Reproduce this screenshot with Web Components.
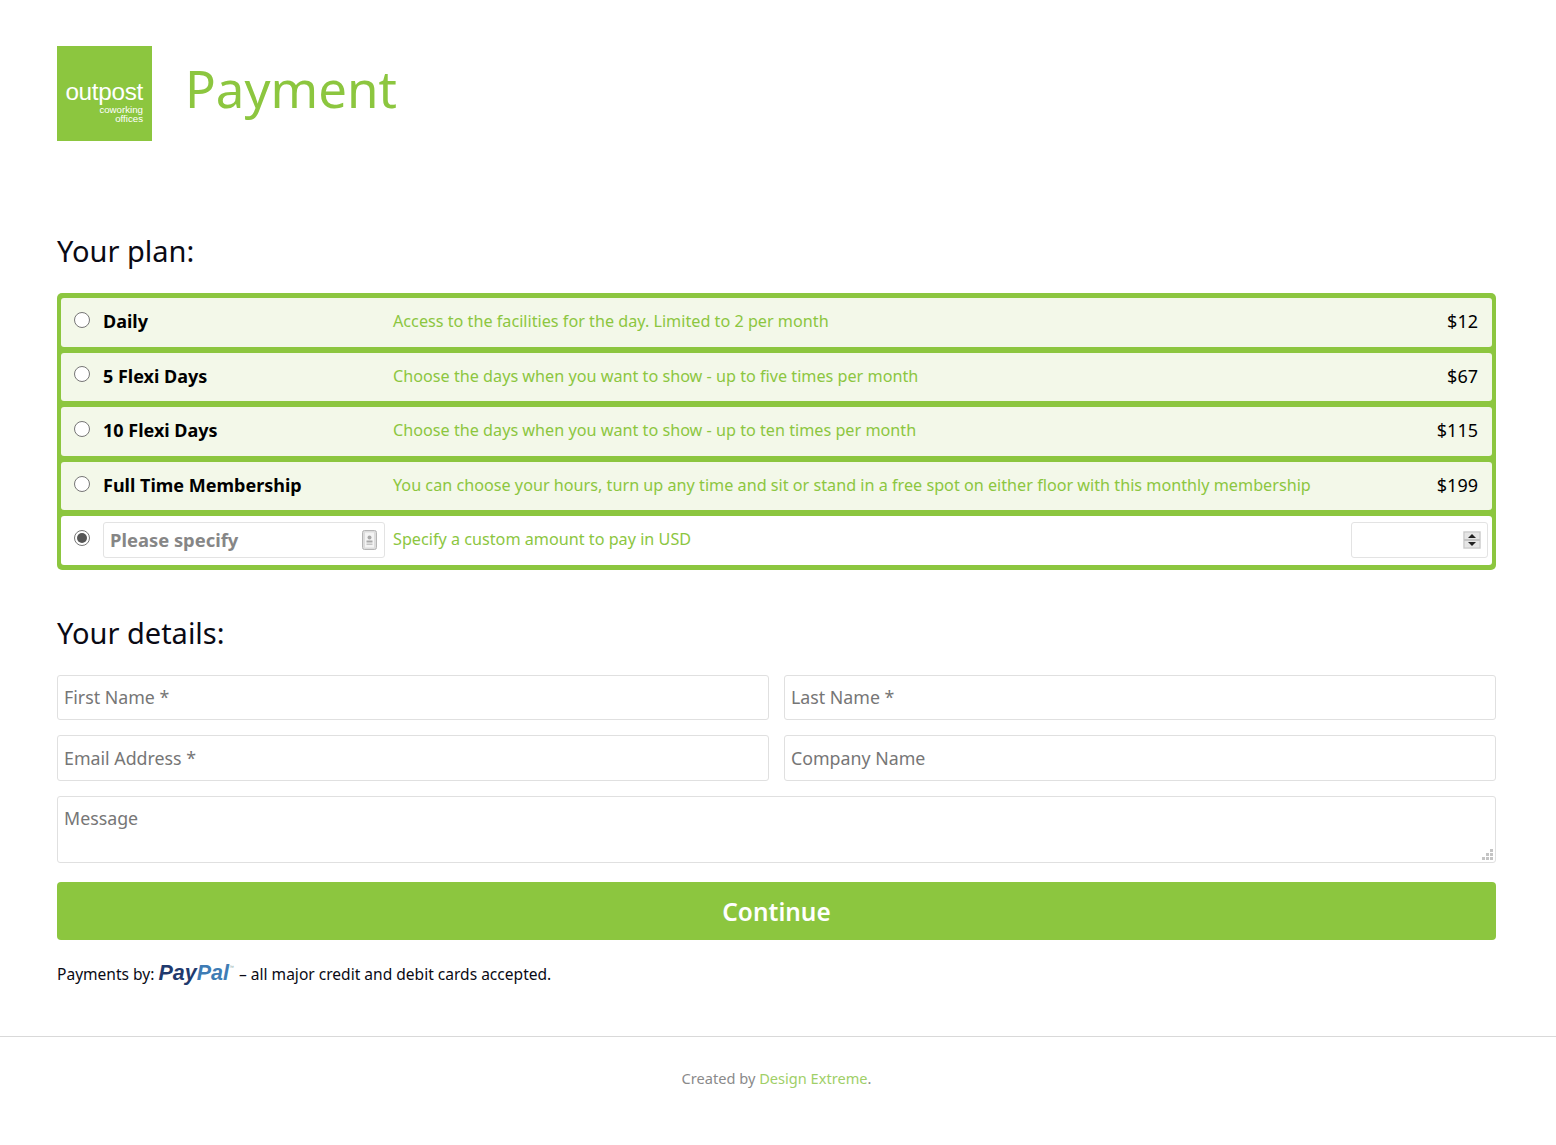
<!DOCTYPE html>
<html>
<head>
<meta charset="utf-8">
<title>Payment</title>
<style>
  html, body { margin: 0; background: #fff; }
  body { font-family: "Noto Sans", "Open Sans", sans-serif; color: #000; }
</style>
</head>
<body>
<pay-page>
  <pay-header slot="header">Payment</pay-header>

  <section-title>Your plan:</section-title>
  <plan-table>
    <plan-row name="Daily" price="$12">Access to the facilities for the day. Limited to 2 per month</plan-row>
    <plan-row name="5 Flexi Days" price="$67">Choose the days when you want to show - up to five times per month</plan-row>
    <plan-row name="10 Flexi Days" price="$115">Choose the days when you want to show - up to ten times per month</plan-row>
    <plan-row name="Full Time Membership" price="$199">You can choose your hours, turn up any time and sit or stand in a free spot on either floor with this monthly membership</plan-row>
    <plan-row custom name="Please specify">Specify a custom amount to pay in USD</plan-row>
  </plan-table>

  <section-title class="details">Your details:</section-title>
  <details-form>
    <form-field>First Name *</form-field>
    <form-field>Last Name *</form-field>
    <form-field>Email Address *</form-field>
    <form-field>Company Name</form-field>
    <form-field multiline>Message</form-field>
  </details-form>

  <pay-button>Continue</pay-button>
  <pay-note></pay-note>
</pay-page>
<pay-footer></pay-footer>

<script>
class PayPage extends HTMLElement {
  constructor() {
    super();
    this.attachShadow({ mode: "open" });
    this.shadowRoot.innerHTML = `
      <style>
        :host { display: block; padding: 46px 60px 0 57px; }
        ::slotted(section-title) { margin-top: 90px; }
        ::slotted(section-title.details) { margin-top: 43px; }
      </style>
      <slot name="header"></slot>
      <slot></slot>
    `;
  }
}

class PayHeader extends HTMLElement {
  constructor() {
    super();
    this.attachShadow({ mode: "open" });
    this.shadowRoot.innerHTML = `
      <style>
        :host { display: flex; align-items: flex-start; gap: 33px; }
        .logo {
          box-sizing: border-box;
          width: 95px;
          height: 95px;
          background: #8cc63f;
          color: #fff;
          font-family: "Liberation Sans", sans-serif;
          text-align: right;
          padding: 34px 9px 0 0;
        }
        .logo b { display: block; font-weight: 400; font-size: 24.3px; line-height: 24px; letter-spacing: -0.3px; }
        .logo span { display: block; font-size: 9.7px; line-height: 9px; }
        .logo span:first-of-type { margin-top: 1px; }
        h1 {
          margin: 10px 0 0;
          font-size: 51px;
          line-height: 64px;
          font-weight: 400;
          color: #8cc63f;
        }
      </style>
      <div class="logo"><b>outpost</b><span>coworking</span><span>offices</span></div>
      <h1><slot></slot></h1>
    `;
  }
}

class SectionTitle extends HTMLElement {
  constructor() {
    super();
    this.attachShadow({ mode: "open" });
    this.shadowRoot.innerHTML = `
      <style>
        :host { display: block; font-size: 29px; line-height: 40px; margin-bottom: 22px; color: #0a0a14; }
      </style>
      <slot></slot>
    `;
  }
}

class PlanTable extends HTMLElement {
  constructor() {
    super();
    this.attachShadow({ mode: "open" });
    this.shadowRoot.innerHTML = `
      <style>
        :host {
          display: grid;
          grid-auto-rows: 48.6px;
          gap: 6px;
          padding: 5px 4px;
          background: #8cc63f;
          border-radius: 5px;
        }
      </style>
      <slot></slot>
    `;
  }
}

class PlanRow extends HTMLElement {
  constructor() {
    super();
    this.attachShadow({ mode: "open" });
    const custom = this.hasAttribute("custom");
    const name = this.getAttribute("name");
    const price = this.getAttribute("price");
    this.shadowRoot.innerHTML = `
      <style>
        :host {
          display: grid;
          grid-template-columns: 16px 295px 1fr auto;
          align-items: center;
          padding: 0 14px 0 13px;
          background: ${custom ? "#fff" : "#f3f8e9"};
          border-radius: 3px;
          font-size: 18px;
        }
        .radio {
          box-sizing: border-box;
          width: 16px;
          height: 16px;
          border: 1px solid #767676;
          border-radius: 50%;
          background: #fff;
          margin-bottom: 5px;
          position: relative;
        }
        .radio.on::after {
          content: "";
          position: absolute;
          inset: 2px;
          border-radius: 50%;
          background: #555;
        }
        .name { margin: 0 0 2px 13px; font-weight: 700; line-height: 24px; }
        .desc { margin: 0 0 2.5px 8px; color: #8cc63f; font-size: 16.2px; white-space: nowrap; }
        .price { color: #000; line-height: 24px; margin-bottom: 2px; }
        .box {
          box-sizing: border-box;
          height: 36px;
          display: flex;
          align-items: center;
          justify-content: space-between;
          border: 1px solid #e3e3e3;
          border-radius: 3px;
          background: #fff;
          margin-bottom: 2px;
        }
        .specify {
          margin-left: 13px;
          padding: 0 7px 0 6px;
          color: #868686;
          font-weight: 700;
          font-size: 18.4px;
        }
        .amount { width: 137px; margin-right: -10px; padding: 0 6px 0 0; justify-content: flex-end; }
        svg { display: block; }
      </style>
      <div class="radio ${custom ? "on" : ""}"></div>
      ${custom
        ? `<div class="box specify"><span>${name}</span>
            <svg width="15" height="20" viewBox="0 0 15 20">
              <rect x="0.5" y="0.5" width="14" height="19" rx="2" fill="#dcdcdc" stroke="#b4b4b4"/>
              <rect x="3" y="2.5" width="9" height="15" fill="#f4f4f4"/>
              <circle cx="7.5" cy="7.5" r="2" fill="#a8a8a8"/>
              <rect x="4.5" y="10.5" width="6" height="2" fill="#a8a8a8"/>
              <rect x="4.5" y="13.5" width="6" height="1.5" fill="#c4c4c4"/>
            </svg></div>`
        : `<div class="name">${name}</div>`}
      <div class="desc"><slot></slot></div>
      ${custom
        ? `<div class="box amount">
            <svg width="18" height="18" viewBox="0 0 18 18">
              <rect width="18" height="18" fill="#efefef"/>
              <rect x="1" y="1" width="16" height="16" fill="#e6e6e6" stroke="#c4c4c4"/>
              <rect x="1" y="8" width="16" height="2" fill="#c4c4c4"/>
              <path d="M9 3 L13 7 H5 Z M9 15 L13 11 H5 Z" fill="#222"/>
            </svg></div>`
        : `<div class="price">${price}</div>`}
    `;
  }
}

class DetailsForm extends HTMLElement {
  constructor() {
    super();
    this.attachShadow({ mode: "open" });
    this.shadowRoot.innerHTML = `
      <style>
        :host {
          display: grid;
          grid-template-columns: 1fr 1fr;
          gap: 15px;
        }
        ::slotted([multiline]) { grid-column: 1 / -1; }
      </style>
      <slot></slot>
    `;
  }
}

class FormField extends HTMLElement {
  constructor() {
    super();
    this.attachShadow({ mode: "open" });
    const multi = this.hasAttribute("multiline");
    this.shadowRoot.innerHTML = `
      <style>
        :host {
          display: block;
          position: relative;
          box-sizing: border-box;
          height: ${multi ? "67px" : "45.5px"};
          padding: ${multi ? "9px" : "9.5px"} 6px 0;
          border: 1px solid #e0e0e0;
          border-radius: 3px;
          background: #fff;
          color: #767676;
          font-size: 17.8px;
          line-height: 24px;
        }
        svg { position: absolute; right: 1px; bottom: 1px; }
      </style>
      <slot></slot>
      ${multi ? `<svg width="12" height="12" viewBox="0 0 12 12" fill="#c4c4c4">
        <path d="M8 0h3v3H8zM4 4h3v3H4zM8 4h3v3H8zM0 8h3v3H0zM4 8h3v3H4zM8 8h3v3H8z"/></svg>` : ""}
    `;
  }
}

class PayButton extends HTMLElement {
  constructor() {
    super();
    this.attachShadow({ mode: "open" });
    this.shadowRoot.innerHTML = `
      <style>
        :host {
          display: block;
          margin-top: 19px;
          height: 58px;
          line-height: 60px;
          text-align: center;
          background: #8cc63f;
          border-radius: 4px;
          color: #fff;
          font-size: 24.4px;
          font-weight: 600;
        }
      </style>
      <slot></slot>
    `;
  }
}

class PayNote extends HTMLElement {
  constructor() {
    super();
    this.attachShadow({ mode: "open" });
    this.shadowRoot.innerHTML = `
      <style>
        :host {
          display: flex;
          align-items: baseline;
          margin-top: 20px;
          font-size: 15.55px;
          line-height: 26px;
          white-space: pre;
          color: #0a0a14;
        }
        .pp {
          margin: 0 1px 0 4px;
          font: italic 700 21.5px/26px "Liberation Sans", sans-serif;
          color: #1f3a6e;
        }
        .pp i { color: #3e7cb5; }
        .pp sup { font-size: 5px; font-weight: 400; color: #8aa; vertical-align: 11px; line-height: 0; }
      </style>
      <span>Payments by:</span><span class="pp">Pay<i>Pal</i><sup>™</sup></span><span> – all major credit and debit cards accepted.</span>
    `;
  }
}

class PayFooter extends HTMLElement {
  constructor() {
    super();
    this.attachShadow({ mode: "open" });
    this.shadowRoot.innerHTML = `
      <style>
        :host {
          display: block;
          margin-top: 49px;
          border-top: 1px solid #d9d9d9;
          padding: 30px 60px 44px 57px;
          text-align: center;
          color: #8a8a8a;
          font-size: 14.6px;
          line-height: 22px;
        }
        a { color: #a0cf67; text-decoration: none; }
      </style>
      Created by <a href="#">Design Extreme</a>.
    `;
  }
}

customElements.define("pay-page", PayPage);
customElements.define("pay-header", PayHeader);
customElements.define("section-title", SectionTitle);
customElements.define("plan-table", PlanTable);
customElements.define("plan-row", PlanRow);
customElements.define("details-form", DetailsForm);
customElements.define("form-field", FormField);
customElements.define("pay-button", PayButton);
customElements.define("pay-note", PayNote);
customElements.define("pay-footer", PayFooter);
</script>
</body>
</html>
